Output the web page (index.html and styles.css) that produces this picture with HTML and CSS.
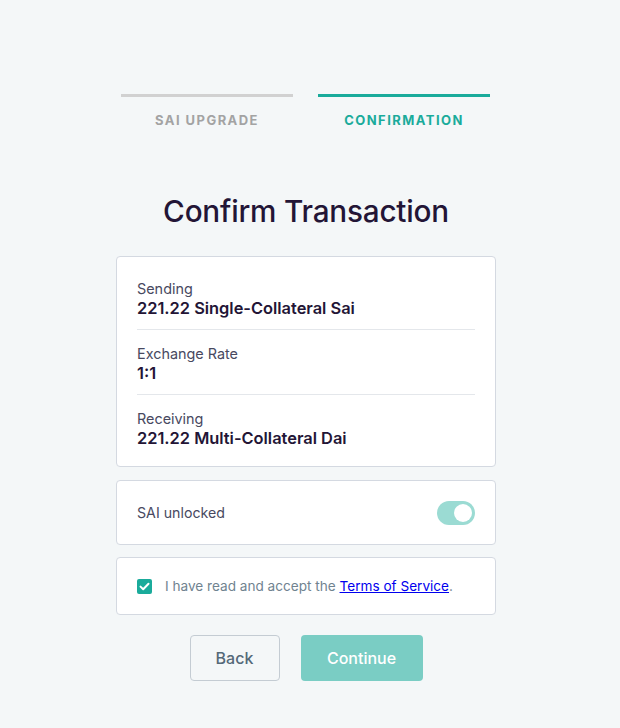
FILE: index.html
```html
<!DOCTYPE html>
<html>
<head>
<meta charset="utf-8">
<link rel="stylesheet" href="styles.css">
</head>
<body>
<main class="page">
  <div class="wrap">
    <div class="steps">
      <div class="step">
        <div class="step-bar"></div>
        <div class="step-label">SAI UPGRADE</div>
      </div>
      <div class="step active">
        <div class="step-bar"></div>
        <div class="step-label">CONFIRMATION</div>
      </div>
    </div>
    <h1 class="title">Confirm Transaction</h1>
    <div class="card details">
      <div class="row">
        <div class="label">Sending</div>
        <div class="value">221.22 Single-Collateral Sai</div>
      </div>
      <div class="row">
        <div class="label">Exchange Rate</div>
        <div class="value">1:1</div>
      </div>
      <div class="row">
        <div class="label">Receiving</div>
        <div class="value">221.22 Multi-Collateral Dai</div>
      </div>
    </div>
    <div class="card toggle-card">
      <span class="toggle-text">SAI unlocked</span>
      <span class="toggle"><span class="knob"></span></span>
    </div>
    <div class="card terms-card">
      <span class="checkbox">
        <svg width="11" height="9" viewBox="0 0 11 9"><path d="M1.5 4.6 L4.2 7.2 L9.5 1.8" fill="none" stroke="#fff" stroke-width="2" stroke-linecap="round" stroke-linejoin="round"/></svg>
      </span>
      <span class="terms-text">I have read and accept the <a href="#" class="terms-link">Terms of Service</a>.</span>
    </div>
    <div class="buttons">
      <button class="btn btn-back">Back</button>
      <button class="btn btn-continue">Continue</button>
    </div>
  </div>
</main>
</body>
</html>
```
FILE: styles.css
```css
html, body {
  margin: 0;
  padding: 0;
  background: #f4f7f8;
}
body {
  font-family: Inter, "Noto Sans", sans-serif;
  color: #231536;
}
.page {
  display: flex;
  justify-content: center;
  padding: 94px 8px 0 0;
}
.wrap {
  width: 380px;
  display: flex;
  flex-direction: column;
}
.steps {
  display: flex;
  gap: 25px;
  padding: 0 6px 0 5px;
}
.step {
  flex: 1;
  display: flex;
  flex-direction: column;
  align-items: center;
}
.step-bar {
  width: 100%;
  height: 3px;
  background: #d1d1d1;
}
.step-label {
  margin-top: 15px;
  font-size: 13px;
  font-weight: 700;
  letter-spacing: 1.45px;
  color: #a3a3a3;
  line-height: 16px;
}
.step.active .step-bar { background: #1aab9b; }
.step.active .step-label { color: #1aab9b; }
.title {
  margin: 65px 0 0;
  text-align: center;
  font-size: 29.7px;
  font-weight: 500;
  line-height: 36px;
  color: #231536;
  letter-spacing: -0.2px;
}
.card {
  background: #fff;
  border: 1px solid #d4d9e1;
  border-radius: 4px;
}
.details {
  margin-top: 27px;
  padding: 8px 20px 7px;
}
.row {
  padding: 15px 0 11px;
  border-bottom: 1px solid #e4e7eb;
}
.row:last-child { border-bottom: none; }
.label {
  font-size: 14.4px;
  line-height: 18px;
  color: #48495f;
}
.value {
  font-size: 16.4px;
  font-weight: 600;
  line-height: 20px;
  color: #231536;
}
.toggle-card {
  margin-top: 13px;
  height: 63px;
  padding: 0 20px;
  display: flex;
  align-items: center;
  justify-content: space-between;
}
.toggle-text {
  font-size: 14.2px;
  color: #48495f;
}
.toggle {
  width: 38px;
  height: 24px;
  border-radius: 12px;
  background: #9bdbd3;
  display: flex;
  align-items: center;
  justify-content: flex-end;
  padding: 0 3px;
  box-sizing: border-box;
}
.knob {
  width: 18px;
  height: 18px;
  border-radius: 50%;
  background: #fff;
}
.terms-card {
  margin-top: 12px;
  height: 56px;
  padding: 0 20px;
  display: flex;
  align-items: center;
  gap: 13px;
}
.checkbox {
  width: 15px;
  height: 15px;
  border-radius: 2px;
  background: #1aab9b;
  display: flex;
  align-items: center;
  justify-content: center;
}
.terms-text {
  font-size: 13.6px;
  color: #708390;
}
.terms-link {
  color: #0000ee;
  text-decoration: underline;
}
.buttons {
  margin-top: 20px;
  display: flex;
  justify-content: center;
  gap: 21px;
}
.btn {
  height: 46px;
  border-radius: 4px;
  font-family: Inter, "Noto Sans", sans-serif;
  font-size: 16px;
  font-weight: 500;
  cursor: pointer;
}
.btn-back {
  width: 90px;
  background: transparent;
  border: 1px solid #c4ccd3;
  color: #546978;
}
.btn-continue {
  width: 122px;
  background: #7acdc4;
  border: none;
  color: #fff;
}
```
